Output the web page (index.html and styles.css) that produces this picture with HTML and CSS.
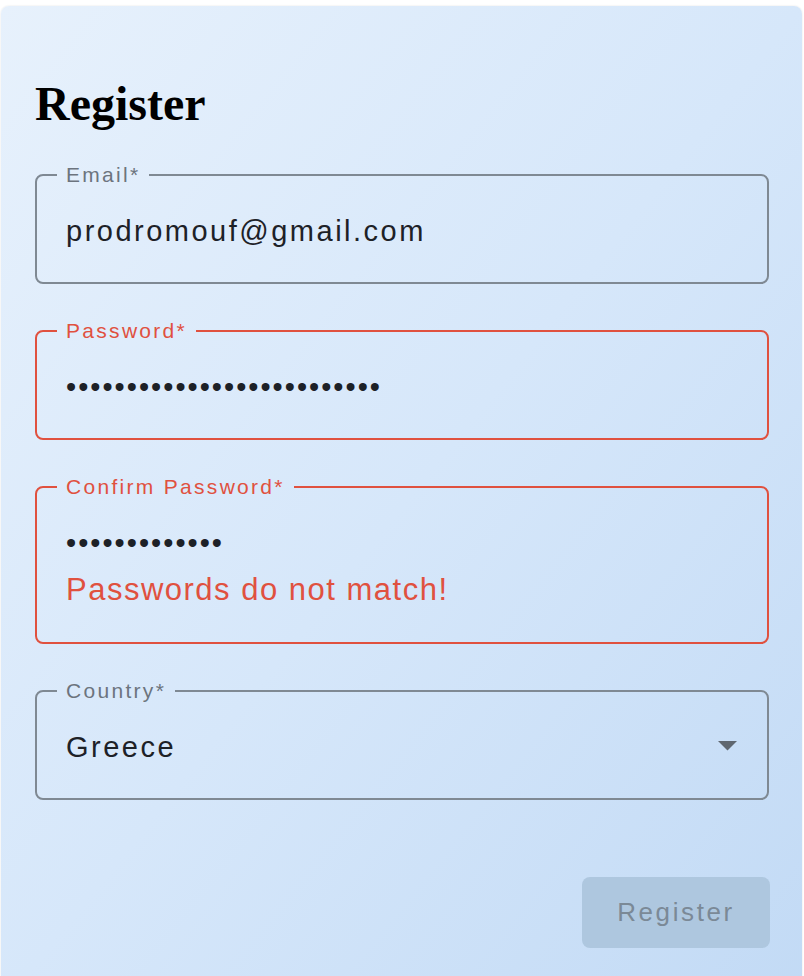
FILE: index.html
```html
<!DOCTYPE html>
<html lang="en">
<head>
<meta charset="utf-8">
<title>Register</title>
<link rel="stylesheet" href="styles.css">
</head>
<body>
<div class="card">
  <h1 class="title">Register</h1>
  <form class="form">
    <fieldset class="field">
      <legend class="label">Email*</legend>
      <div class="value">prodromouf@gmail.com</div>
    </fieldset>
    <fieldset class="field error">
      <legend class="label">Password*</legend>
      <div class="value dots">••••••••••••••••••••••••••</div>
    </fieldset>
    <fieldset class="field error">
      <legend class="label">Confirm Password*</legend>
      <div class="value dots">•••••••••••••</div>
      <div class="helper">Passwords do not match!</div>
    </fieldset>
    <fieldset class="field">
      <legend class="label">Country*</legend>
      <div class="select-row">
        <div class="value">Greece</div>
        <svg class="arrow" viewBox="7 10 10 5" width="19" height="9.5" aria-hidden="true"><path d="M7 10l5 5 5-5z"/></svg>
      </div>
    </fieldset>
    <div class="actions">
      <button type="button" class="btn" disabled>Register</button>
    </div>
  </form>
</div>
</body>
</html>
```
FILE: styles.css
```css
html, body {
  margin: 0;
  padding: 0;
  background: #ffffff;
}
body {
  font-family: "Liberation Sans", Arial, sans-serif;
  overflow: hidden;
}
.card {
  margin: 6px 2px 0 1px;
  min-height: 1000px;
  box-sizing: border-box;
  padding: 70px 33px 0 34px;
  border-radius: 8px 8px 0 0;
  background: linear-gradient(to bottom right, #e7f1fc 0%, #d6e7fa 50%, #c2daf5 100%);
  box-shadow: 0 0 2px rgba(0, 0, 0, 0.12);
}
.title {
  margin: 0;
  font-family: "Liberation Serif", "Times New Roman", serif;
  font-weight: 700;
  font-size: 48px;
  line-height: 56px;
  color: #000;
}
.form {
  display: flex;
  flex-direction: column;
  gap: 35px;
  margin-top: 31px;
}
.field {
  margin: 0;
  padding: 27px 30px 34px 20px;
  border: 2px solid #7f8993;
  border-radius: 8px;
  min-width: 0;
}
.label {
  padding: 0 9px;
  font-size: 21px;
  line-height: 24px;
  letter-spacing: 2.3px;
  color: #6c747e;
}
.value {
  padding-left: 9px;
  font-size: 29px;
  line-height: 34px;
  letter-spacing: 2.5px;
  color: #1d2127;
}
.value.dots {
  letter-spacing: 2px;
}
.field.error {
  border-color: #e0513f;
}
.field.error .label {
  color: #e0513f;
}
.helper {
  margin-top: 12px;
  padding-left: 9px;
  font-size: 31px;
  line-height: 36px;
  letter-spacing: 1.5px;
  color: #e0513f;
}
.select-row {
  display: flex;
  align-items: center;
  justify-content: space-between;
}
.arrow {
  fill: #5f6770;
  display: block;
  margin-top: -2px;
}
.actions {
  display: flex;
  justify-content: flex-end;
  margin-top: 42px;
  margin-right: -1px;
}
.btn {
  width: 188px;
  height: 71px;
  border: 0;
  border-radius: 8px;
  background: #aec7df;
  color: #7b8996;
  font-family: "Liberation Sans", Arial, sans-serif;
  font-size: 26px;
  letter-spacing: 2.6px;
  padding: 0;
}
```
